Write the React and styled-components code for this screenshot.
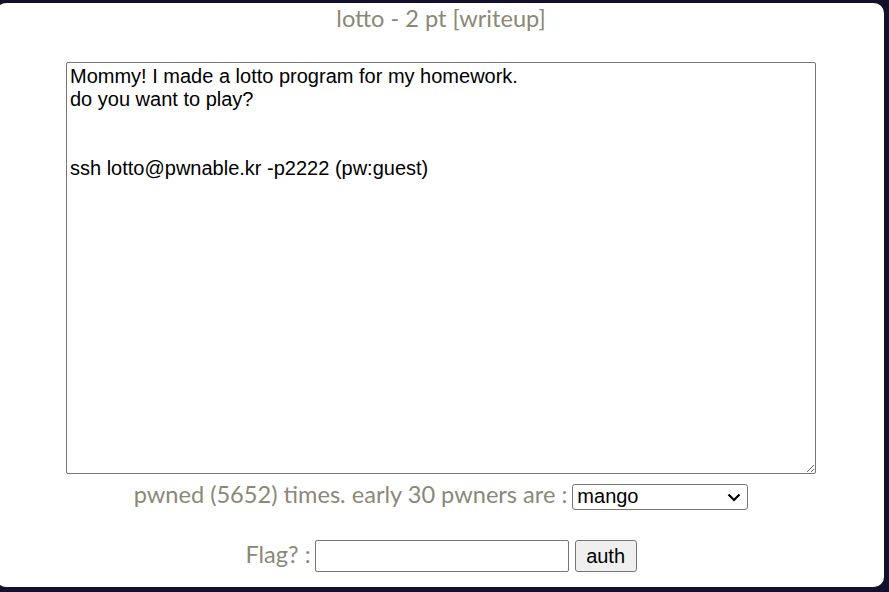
import React from 'react';
import styled, { createGlobalStyle } from 'styled-components';

const GlobalStyle = createGlobalStyle`
  html, body {
    margin: 0;
    padding: 0;
    background: #12102c;
  }
`;

const Panel = styled.div`
  box-sizing: border-box;
  width: 888px;
  height: 584px;
  margin: 3px 0 0 -4px;
  padding-top: 1px;
  background: #ffffff;
  border-radius: 10px;
  display: flex;
  flex-direction: column;
  align-items: center;
  font-family: Lato, 'Open Sans', sans-serif;
  color: #8b8878;
`;

const Title = styled.div`
  font-size: 23.6px;
  line-height: 28px;
  padding-left: 2px;
`;

const Description = styled.textarea`
  box-sizing: border-box;
  width: 750px;
  height: 412px;
  margin: 30px 0 0 2px;
  padding: 2px 3px;
  border: 1px solid #767676;
  border-radius: 2px;
  font-family: Arial, 'Liberation Sans', sans-serif;
  font-size: 20px;
  line-height: 23px;
  color: #000;
  background: #fff;
  resize: both;
  outline: none;
`;

const Row = styled.div`
  display: flex;
  align-items: baseline;
  gap: ${({ gap }) => gap}px;
  margin-top: ${({ top }) => top}px;
  padding-left: 2px;
  font-size: 23.6px;
  line-height: 28px;
`;

const Label = styled.span`
  white-space: pre;
`;

const SelectWrap = styled.span`
  position: relative;
  display: inline-flex;
`;

const Select = styled.select`
  box-sizing: border-box;
  width: 176px;
  height: 26px;
  padding: 0 2px 0 4px;
  border: 1px solid #767676;
  border-radius: 3px;
  background: #fff;
  appearance: none;
  font-family: Arial, 'Liberation Sans', sans-serif;
  font-size: 20px;
  line-height: 23px;
  color: #000;
`;

const Chevron = styled.svg`
  position: absolute;
  right: 7px;
  top: 9px;
  pointer-events: none;
`;

const FlagInput = styled.input`
  box-sizing: border-box;
  width: 254px;
  height: 32px;
  padding: 1px 2px;
  border: 1px solid #767676;
  border-radius: 2px;
  font-family: Arial, 'Liberation Sans', sans-serif;
  font-size: 20px;
`;

const AuthButton = styled.button`
  box-sizing: border-box;
  width: 62px;
  height: 32px;
  margin-left: 2px;
  padding: 0;
  border: 1px solid #767676;
  border-radius: 3px;
  background: #efefef;
  font-family: Arial, 'Liberation Sans', sans-serif;
  font-size: 20px;
  color: #000;
`;

const description = `Mommy! I made a lotto program for my homework.
do you want to play?


ssh lotto@pwnable.kr -p2222 (pw:guest)`;

const pwners = ['mango', 'rubiya', 'jmpesp', 'daehee'];

const App = () => (
  <>
    <GlobalStyle />
    <Panel>
      <Title>lotto - 2 pt [writeup]</Title>
      <Description defaultValue={description} spellCheck={false} />
      <Row top={6} gap={5}>
        <Label>pwned (5652) times. early 30 pwners are :</Label>
        <SelectWrap>
          <Select defaultValue="mango">
            {pwners.map(name => (
              <option key={name}>{name}</option>
            ))}
          </Select>
          <Chevron width="14" height="9" viewBox="0 0 14 9">
            <path d="M1.5 1.5 L7 7 L12.5 1.5" fill="none" stroke="#000" strokeWidth="2.2" />
          </Chevron>
        </SelectWrap>
      </Row>
      <Row top={30} gap={4}>
        <Label>Flag? :</Label>
        <FlagInput type="text" />
        <AuthButton>auth</AuthButton>
      </Row>
    </Panel>
  </>
);

export default App;
